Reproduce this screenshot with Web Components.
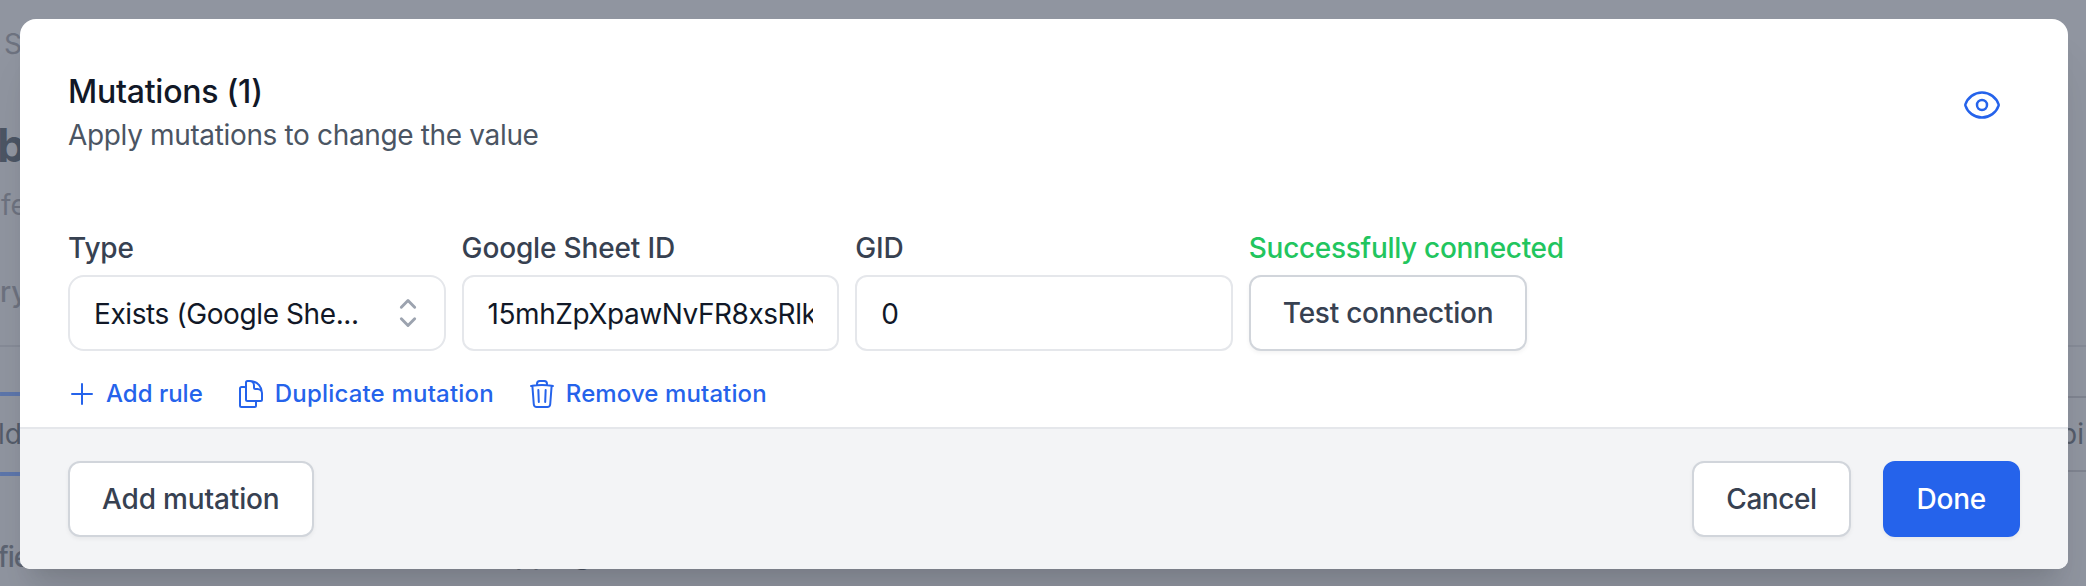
<!DOCTYPE html>
<html lang="en">
<head>
<meta charset="utf-8">
<title>Mutations</title>
<style>
    html, body{
        margin: 0;
        height: 586px;
        overflow: hidden;
    }
    body{
        font-family: Inter, "Liberation Sans", sans-serif;
        font-size: 28px;
        line-height: 40px;
        font-optical-sizing: none;
        font-variation-settings: "opsz" 14;
        background: #9095a0;
    }
</style>
</head>
<body>
<mutations-app></mutations-app>

<script>
const icons = {
    eye: `<path d="M2.036 12.322a1.012 1.012 0 010-.639C3.423 7.51 7.36 4.5 12 4.5c4.638 0 8.573 3.007 9.963 7.178.07.207.07.431 0 .639C20.577 16.49 16.64 19.5 12 19.5c-4.638 0-8.573-3.007-9.963-7.178z"/><path d="M15 12a3 3 0 11-6 0 3 3 0 016 0z"/>`,
    plus: `<path d="M12 4.5v15m7.5-7.5h-15"/>`,
    duplicate: `<path d="M15.75 17.25v3.375c0 .621-.504 1.125-1.125 1.125h-9.75a1.125 1.125 0 01-1.125-1.125V7.875c0-.621.504-1.125 1.125-1.125H6.75a9.06 9.06 0 011.5.124m7.5 10.376h3.375c.621 0 1.125-.504 1.125-1.125V11.25c0-4.46-3.243-8.161-7.5-8.876a9.06 9.06 0 00-1.5-.124H9.375c-.621 0-1.125.504-1.125 1.125v3.5m7.5 10.375H9.375a1.125 1.125 0 01-1.125-1.125v-9.25m12 6.625v-1.875a3.375 3.375 0 00-3.375-3.375h-1.5a1.125 1.125 0 01-1.125-1.125v-1.5a3.375 3.375 0 00-3.375-3.375H9.75"/>`,
    trash: `<path d="M14.74 9l-.346 9m-4.788 0L9.26 9m9.968-3.21c.342.052.682.107 1.022.166m-1.022-.165L18.16 19.673a2.25 2.25 0 01-2.244 2.077H8.084a2.25 2.25 0 01-2.244-2.077L4.772 5.79m14.456 0a48.108 48.108 0 00-3.478-.397m-12 .562c.34-.059.68-.114 1.022-.165m0 0a48.11 48.11 0 013.478-.397m7.5 0v-.916c0-1.18-.91-2.164-2.09-2.201a51.964 51.964 0 00-3.32 0c-1.18.037-2.09 1.022-2.09 2.201v.916m7.5 0a48.667 48.667 0 00-7.5 0"/>`,
    selector: `<path d="M8 8.5l4-4 4 4m0 7l-4 4-4-4"/>`
};

// base class: puts html() in an open shadow root
class BaseElement extends HTMLElement {
    constructor(){
        super();
        this.attachShadow({mode: "open"});
    }
    connectedCallback(){
        this.shadowRoot.innerHTML = this.html();
    }
}

class UiIcon extends BaseElement {
    html(){
        return `
        <style>
            :host{
                display: block;
                flex: none;
                width: var(--icon-size, 32px);
                height: var(--icon-size, 32px);
            }
            svg{
                display: block;
                width: 100%;
                height: 100%;
            }
        </style>
        <svg viewBox="0 0 24 24" fill="none" stroke="currentColor" stroke-width="${this.getAttribute("stroke") || 1.5}" stroke-linecap="round" stroke-linejoin="round">${icons[this.getAttribute("name")]}</svg>
        `;
    }
}
customElements.define('ui-icon', UiIcon);

class UiButton extends BaseElement {
    html(){
        return `
        <style>
            :host{
                display: block;
                width: fit-content;
                letter-spacing: -.25px;
            }
            button{
                display: block;
                box-sizing: border-box;
                height: 76px;
                margin: 0;
                padding: 0 32px;
                border: 2px solid #d1d5db;
                border-radius: 12px;
                background: #fff;
                box-shadow: 0 2px 4px rgba(0, 0, 0, .05);
                color: #374151;
                font: inherit;
                font-weight: 500;
                letter-spacing: inherit;
                white-space: nowrap;
            }
            :host([primary]) button{
                border-color: #2563eb;
                background: #2563eb;
                color: #fff;
            }
        </style>
        <button type="button"><slot></slot></button>
        `;
    }
}
customElements.define('ui-button', UiButton);

class FormField extends BaseElement {
    html(){
        return `
        <style>
            :host{
                display: flex;
                flex-direction: column;
                gap: 7px;
                min-width: 0;
            }
            .label{
                padding-top: 1px;
                color: var(--label-color, #374151);
                font-weight: 500;
                letter-spacing: var(--label-spacing, -.15px);
                white-space: nowrap;
            }
        </style>
        <div class="label">${this.getAttribute("label")}</div>
        <slot></slot>
        `;
    }
}
customElements.define('form-field', FormField);

class TextInput extends BaseElement {
    html(){
        return `
        <style>
            :host{
                display: block;
                box-sizing: border-box;
                height: 76px;
                padding: 17px 24px 15px;
                border: 2px solid #e5e7eb;
                border-radius: 12px;
                background: #fff;
                color: #111827;
                letter-spacing: -.45px;
            }
            .value{
                overflow: hidden;
                white-space: nowrap;
            }
        </style>
        <div class="value"><slot></slot></div>
        `;
    }
}
customElements.define('text-input', TextInput);

class SelectBox extends BaseElement {
    html(){
        return `
        <style>
            :host{
                display: flex;
                box-sizing: border-box;
                align-items: center;
                justify-content: space-between;
                height: 76px;
                padding: 0 16px 0 24px;
                border: 2px solid #e5e7eb;
                border-radius: 16px;
                background: #fff;
                color: #111827;
                letter-spacing: -.4px;
                white-space: nowrap;
            }
            span{
                padding-top: 1px;
            }
            ui-icon{
                --icon-size: 40px;
                color: #9ca3af;
            }
        </style>
        <span><slot></slot></span>
        <ui-icon name="selector" stroke="1.75"></ui-icon>
        `;
    }
}
customElements.define('select-box', SelectBox);

class LinkButton extends BaseElement {
    html(){
        return `
        <style>
            :host{
                display: flex;
                align-items: center;
                gap: 8px;
                color: #2563eb;
                font-size: 24px;
                line-height: 32px;
                font-weight: 500;
                white-space: nowrap;
            }
            span{
                padding-top: 1px;
            }
        </style>
        <ui-icon name="${this.getAttribute("icon")}"></ui-icon>
        <span><slot></slot></span>
        `;
    }
}
customElements.define('link-button', LinkButton);

// dialog shell: header, body and grey footer
class ModalDialog extends BaseElement {
    html(){
        return `
        <style>
            :host{
                display: flex;
                flex-direction: column;
                box-sizing: border-box;
                width: 2048px;
                height: 550px;
                border-radius: 16px 16px 10px 10px;
                overflow: hidden;
                background: #fff;
                box-shadow: 0 40px 50px -10px rgba(0, 0, 0, .1), 0 16px 20px -12px rgba(0, 0, 0, .1);
            }
            header{
                display: flex;
                align-items: center;
                justify-content: space-between;
                height: 88px;
                padding: 48px 66px 0 48px;
            }
            h3{
                margin: 2px 0 0;
                color: #111827;
                font-size: 32px;
                line-height: 46px;
                font-weight: 500;
                letter-spacing: -.25px;
            }
            p{
                margin: 0;
                color: #4b5563;
                letter-spacing: -.35px;
            }
            header ui-icon{
                --icon-size: 40px;
                margin-bottom: 12px;
                color: #2563eb;
            }
            main{
                flex: 1;
                padding: 72px 48px 0;
            }
            footer{
                display: flex;
                justify-content: space-between;
                padding: 32px 48px;
                border-top: 2px solid #e5e7eb;
                background: #f3f4f6;
            }
            .right{
                display: flex;
                gap: 32px;
            }
        </style>
        <header>
            <div>
                <h3>${this.getAttribute("heading")}</h3>
                <p>${this.getAttribute("description")}</p>
            </div>
            <ui-icon name="eye"></ui-icon>
        </header>
        <main><slot></slot></main>
        <footer>
            <slot name="left"></slot>
            <div class="right"><slot name="right"></slot></div>
        </footer>
        `;
    }
}
customElements.define('modal-dialog', ModalDialog);

// dimmed page under the dialog
class DimmedPage extends BaseElement {
    html(){
        return `
        <style>
            :host{
                display: flex;
                flex-direction: column;
                height: 586px;
                overflow: hidden;
                color: #6d727f;
                white-space: nowrap;
            }
            .crumb{
                padding: 24px 0 0 4px;
            }
            .title{
                margin: 51px 0 0 -3px;
                color: #4c5564;
                font-size: 46px;
                line-height: 60px;
                font-weight: 700;
            }
            .sub{
                margin: 10px 0 0 1px;
            }
            .section{
                height: 73px;
                margin-top: 47px;
                border-bottom: 2px solid #868b97;
                font-weight: 500;
            }
            .tabs{
                display: flex;
                justify-content: space-between;
                align-items: center;
                height: 84px;
                margin-top: 45px;
                color: #545c6a;
            }
            .active{
                box-sizing: border-box;
                width: 200px;
                height: 84px;
                padding: 18px 0;
                border: solid #5d76ab;
                border-width: 4px 0;
                text-indent: -2px;
            }
            .other{
                box-sizing: border-box;
                width: 26px;
                height: 76px;
                padding: 16px 0;
                border: solid #7f8490;
                border-width: 2px 0;
            }
            .row{
                display: flex;
                margin-top: 61px;
                color: #5d6472;
                font-weight: 500;
            }
            .row span:first-child{
                margin-left: -2px;
                letter-spacing: -1px;
            }
            .row span:last-child{
                margin: -3px 0 0 486px;
                color: #4c5564;
            }
        </style>
        <div class="crumb">S</div>
        <div class="title">b</div>
        <div class="sub">fe</div>
        <div class="section">ry</div>
        <div class="tabs">
            <div class="active">ld</div>
            <div class="other">pi</div>
        </div>
        <div class="row"><span>fie</span><span>pping</span></div>
        `;
    }
}
customElements.define('dimmed-page', DimmedPage);

class MutationsApp extends BaseElement {
    html(){
        return `
        <style>
            :host{
                display: block;
                position: relative;
                width: 2086px;
                height: 586px;
                overflow: hidden;
            }
            modal-dialog{
                position: absolute;
                top: 19px;
                left: 20px;
            }
            .fields{
                display: grid;
                grid-template-columns: repeat(5, minmax(0, 1fr));
                gap: 16px;
            }
            .connected{
                --label-color: #22c55e;
                --label-spacing: -.3px;
            }
            .links{
                display: flex;
                gap: 32px;
                margin: 26px 0 0 -2px;
            }
            .duplicate{
                letter-spacing: .19px;
            }
            .remove{
                letter-spacing: .1px;
            }
            .add{
                letter-spacing: -.15px;
            }
            .cancel{
                letter-spacing: -.45px;
            }
        </style>
        <dimmed-page></dimmed-page>
        <modal-dialog heading="Mutations (1)" description="Apply mutations to change the value">
            <div class="fields">
                <form-field label="Type"><select-box>Exists (Google She...</select-box></form-field>
                <form-field label="Google Sheet ID"><text-input>15mhZpXpawNvFR8xsRlk</text-input></form-field>
                <form-field label="GID"><text-input>0</text-input></form-field>
                <form-field class="connected" label="Successfully connected"><ui-button>Test connection</ui-button></form-field>
            </div>
            <div class="links">
                <link-button icon="plus">Add rule</link-button>
                <link-button class="duplicate" icon="duplicate">Duplicate mutation</link-button>
                <link-button class="remove" icon="trash">Remove mutation</link-button>
            </div>
            <ui-button class="add" slot="left">Add mutation</ui-button>
            <ui-button class="cancel" slot="right">Cancel</ui-button>
            <ui-button slot="right" primary>Done</ui-button>
        </modal-dialog>
        `;
    }
}
customElements.define('mutations-app', MutationsApp);
</script>
</body>
</html>
